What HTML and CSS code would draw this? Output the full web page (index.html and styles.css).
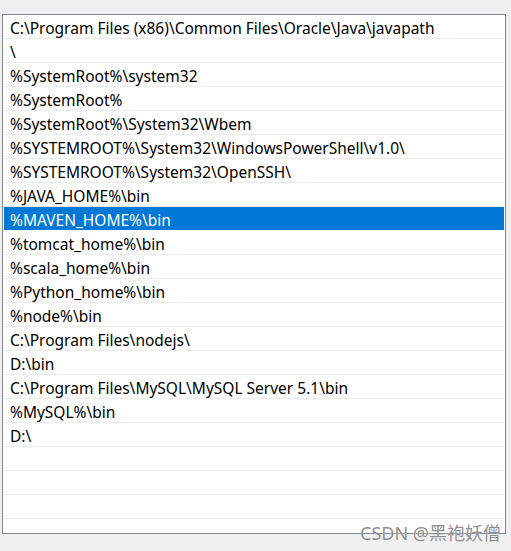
FILE: index.html
```html
<!DOCTYPE html>
<html>
<head>
<meta charset="utf-8">
<link rel="stylesheet" href="styles.css">
</head>
<body>
<div class="page">
  <div class="list">
    <div class="row">C:\Program Files (x86)\Common Files\Oracle\Java\javapath</div>
    <div class="row">\</div>
    <div class="row">%SystemRoot%\system32</div>
    <div class="row">%SystemRoot%</div>
    <div class="row">%SystemRoot%\System32\Wbem</div>
    <div class="row">%SYSTEMROOT%\System32\WindowsPowerShell\v1.0\</div>
    <div class="row">%SYSTEMROOT%\System32\OpenSSH\</div>
    <div class="row">%JAVA_HOME%\bin</div>
    <div class="row selected">%MAVEN_HOME%\bin</div>
    <div class="row">%tomcat_home%\bin</div>
    <div class="row">%scala_home%\bin</div>
    <div class="row">%Python_home%\bin</div>
    <div class="row">%node%\bin</div>
    <div class="row">C:\Program Files\nodejs\</div>
    <div class="row">D:\bin</div>
    <div class="row">C:\Program Files\MySQL\MySQL Server 5.1\bin</div>
    <div class="row">%MySQL%\bin</div>
    <div class="row">D:\</div>
    <div class="row"></div>
    <div class="row"></div>
    <div class="row"></div>
    <div class="row"></div>
  </div>
  <div class="watermark">CSDN @黑袍妖僧</div>
</div>
</body>
</html>
```
FILE: styles.css
```css
html, body {
  margin: 0;
  padding: 0;
  background: #f0f0f0;
}
.page {
  position: relative;
  width: 511px;
  height: 551px;
  padding: 14px 0 0 2px;
  box-sizing: border-box;
}
.list {
  width: 504px;
  height: 520px;
  box-sizing: border-box;
  border: 1px solid #828790;
  background: #ffffff;
  padding: 0 1px 0 1px;
  overflow: hidden;
  font-family: "Noto Sans", "Noto Sans CJK SC", sans-serif;
  font-size: 15.5px;
  color: #000;
}
.row {
  height: 23px;
  line-height: 26px;
  border-bottom: 1px solid #ececec;
  padding-left: 6px;
  white-space: nowrap;
}
.row.selected {
  background: #0078d7;
  color: #fff;
  border-bottom-color: #ffffff;
}
.watermark {
  position: absolute;
  right: 10px;
  top: 519px;
  font-family: "Noto Sans", "Noto Sans CJK SC", sans-serif;
  font-size: 18px;
  color: rgba(120,120,120,0.85);
  text-shadow: 0 0 1px #fff;
}
```
